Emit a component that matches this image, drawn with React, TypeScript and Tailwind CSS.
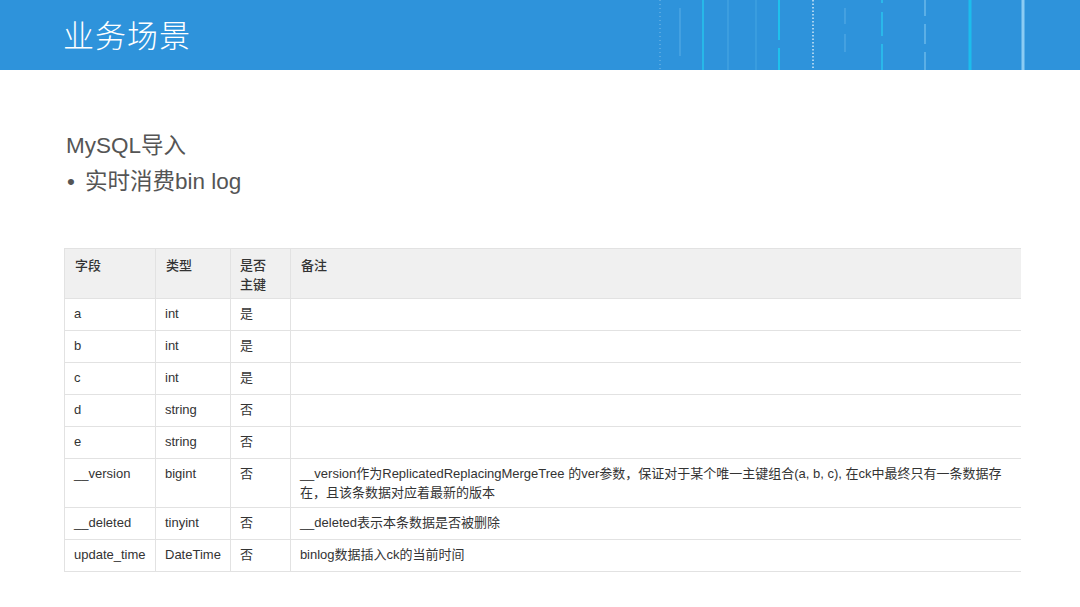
import React from "react";

const rows: [string, string, string, string][] = [
  ["a", "int", "是", ""],
  ["b", "int", "是", ""],
  ["c", "int", "是", ""],
  ["d", "string", "否", ""],
  ["e", "string", "否", ""],
  [
    "__version",
    "bigint",
    "否",
    "__version作为ReplicatedReplacingMergeTree 的ver参数，保证对于某个唯一主键组合(a, b, c), 在ck中最终只有一条数据存在，且该条数据对应着最新的版本",
  ],
  ["__deleted", "tinyint", "否", "__deleted表示本条数据是否被删除"],
  ["update_time", "DateTime", "否", "binlog数据插入ck的当前时间"],
];

const HeaderLines = () => (
  <svg className="absolute inset-0" width="1080" height="70" viewBox="0 0 1080 70">
    <line x1="660" y1="0" x2="660" y2="70" stroke="#7fbde9" strokeWidth="1" strokeDasharray="1 3" />
    <line x1="680" y1="8" x2="680" y2="56" stroke="#5aaee6" strokeWidth="1" />
    <line x1="703" y1="0" x2="703" y2="70" stroke="#27b8e8" strokeWidth="2" />
    <line x1="728" y1="0" x2="728" y2="70" stroke="#4aa8e3" strokeWidth="1" />
    <line x1="756" y1="0" x2="756" y2="70" stroke="#45a6e3" strokeWidth="1" />
    <line x1="779" y1="0" x2="779" y2="40" stroke="#1fc0ec" strokeWidth="2" />
    <line x1="779" y1="48" x2="779" y2="70" stroke="#1fc0ec" strokeWidth="2" />
    <line x1="813" y1="0" x2="813" y2="70" stroke="#cfe8f8" strokeWidth="1.5" strokeDasharray="1.5 2" />
    <line x1="845" y1="8" x2="845" y2="24" stroke="#5aaee6" strokeWidth="1" />
    <line x1="845" y1="34" x2="845" y2="52" stroke="#5aaee6" strokeWidth="1" />
    <line x1="882" y1="0" x2="882" y2="3" stroke="#2ab8ea" strokeWidth="2" />
    <line x1="882" y1="12" x2="882" y2="36" stroke="#2ab8ea" strokeWidth="2" />
    <line x1="882" y1="44" x2="882" y2="70" stroke="#2ab8ea" strokeWidth="2" />
    <line x1="925" y1="0" x2="925" y2="16" stroke="#6bb8ea" strokeWidth="1.5" />
    <line x1="925" y1="24" x2="925" y2="44" stroke="#6bb8ea" strokeWidth="1.5" />
    <line x1="925" y1="52" x2="925" y2="70" stroke="#6bb8ea" strokeWidth="1.5" />
    <line x1="970" y1="0" x2="970" y2="70" stroke="#1cbdec" strokeWidth="3" />
    <line x1="1023" y1="0" x2="1023" y2="70" stroke="#8cccf3" strokeWidth="3" />
  </svg>
);

export default function App() {
  return (
    <div
      className="w-[1080px] h-[607px] bg-white overflow-hidden"
      style={{ fontFamily: '"Liberation Sans", "Noto Sans CJK SC", sans-serif' }}
    >
      <div className="relative h-[70px] bg-[#2e93db]">
        <HeaderLines />
        <div className="relative pl-[63px] pt-[17px] text-[31px] leading-[40px] font-light text-white tracking-[1px]">
          业务场景
        </div>
      </div>

      <div className="pl-[66px] pt-[58px] text-[#555] text-[22.5px] leading-[36px]">
        <div>MySQL导入</div>
        <div className="flex">
          <span className="w-[19px] pl-[1px]">•</span>
          <span>实时消费bin log</span>
        </div>
      </div>

      <div className="pl-[64px] pt-[48px]">
        <table className="w-[957px] border-collapse text-[13px] leading-[19px] text-[#333]">
          <thead>
            <tr className="bg-[#f0f0f0] h-[50px]">
              <th className="w-[91px] border border-[#e2e2e2] px-[10px] pt-[7px] align-top text-left font-medium">字段</th>
              <th className="w-[74px] border border-[#e2e2e2] px-[10px] pt-[7px] align-top text-left font-medium">类型</th>
              <th className="w-[60px] border border-[#e2e2e2] px-[9px] pt-[7px] align-top text-left font-medium">
                是否
                <br />
                主键
              </th>
              <th className="border border-[#e2e2e2] border-r-0 px-[10px] pt-[7px] align-top text-left font-medium">备注</th>
            </tr>
          </thead>
          <tbody>
            {rows.map((r, i) => (
              <tr key={i} className="h-[32px]">
                <td className="border border-[#e2e2e2] px-[9px] pt-[5px] pb-[5px] align-top">{r[0]}</td>
                <td className="border border-[#e2e2e2] px-[9px] pt-[5px] pb-[5px] align-top">{r[1]}</td>
                <td className="border border-[#e2e2e2] px-[9px] pt-[5px] pb-[5px] align-top">{r[2]}</td>
                <td className="border border-[#e2e2e2] border-r-0 pl-[9px] pr-[8px] pt-[5px] pb-[5px] align-top">{r[3]}</td>
              </tr>
            ))}
          </tbody>
        </table>
      </div>
    </div>
  );
}
